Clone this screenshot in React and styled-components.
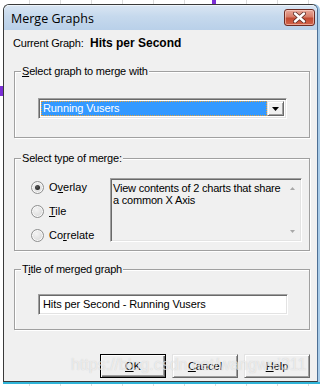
import React from 'react';
import styled, { createGlobalStyle, css } from 'styled-components';

const Global = createGlobalStyle`
  html, body { margin: 0; padding: 0; background: #fff; }
  #root { width: 321px; height: 386px; overflow: hidden; }
`;

const sunken = css`
  border: 1px solid;
  border-color: #a0a0a0 #fff #fff #a0a0a0;
  box-shadow: inset 1px 1px 0 #696969, inset -1px -1px 0 #e3e3e3;
`;

const raised = css`
  border: 1px solid;
  border-color: #e3e3e3 #696969 #696969 #e3e3e3;
  box-shadow: inset 1px 1px 0 #fff, inset -1px -1px 0 #a0a0a0;
`;

const Page = styled.div`
  position: relative;
  width: 321px;
  height: 386px;
  box-sizing: border-box;
  padding: 4px 0 0 3px;
  background:
    linear-gradient(#7b2fd6, #7b2fd6) 212px 0 / 4px 4px no-repeat,
    linear-gradient(#7b2fd6, #7b2fd6) 0 86px / 3px 10px no-repeat,
    linear-gradient(90deg, #dcdcdc 1px, transparent 1px) 29px 0 / 31px 100% repeat-x,
    #fff;
  font-family: "Liberation Sans", Arial, sans-serif;
  font-size: 11px;
  color: #000;
`;

const Window = styled.div`
  width: 315px;
  height: 378px;
  box-sizing: border-box;
  border: 1px solid #3a3a3a;
  border-right-color: #4d6f94;
  border-radius: 6px 6px 0 0;
  box-shadow: 1px 0 0 #a8cbe8, 2px 0 0 #a8cbe8, 0 1px 0 #2fb4d8, 1px 1px 0 #2fb4d8, 0 2px 0 #2fb4d8, 2px 2px 0 #2fb4d8;
  background: #f0f0f0;
  display: flex;
  flex-direction: column;
  overflow: hidden;
`;

const TitleBar = styled.div`
  height: 25px;
  flex: none;
  display: flex;
  align-items: center;
  justify-content: space-between;
  padding: 0 2px 0 7px;
  background: linear-gradient(#dae6f3, #c6d9ed 45%, #b9d0e9);
  border-radius: 5px 5px 0 0;
  box-shadow: inset 0 1px 0 #eef4fa;
`;

const TitleText = styled.span`
  font-family: "Open Sans", "Noto Sans", sans-serif;
  font-size: 12.5px;
  color: #000;
  padding-top: 1px;
`;

const CloseButton = styled.div`
  width: 29px;
  height: 15px;
  border: 1px solid #6e2b22;
  border-radius: 3px;
  background: linear-gradient(#e9a99b, #d77d69 45%, #c24a32 55%, #d2644a);
  box-shadow: inset 0 0 0 1px rgba(255, 220, 210, 0.55);
  display: flex;
  align-items: center;
  justify-content: center;
`;

const Body = styled.div`
  flex: 1;
  display: flex;
  flex-direction: column;
  padding: 0 0 0 10px;
`;

const CurrentRow = styled.div`
  display: flex;
  align-items: baseline;
  margin: 7px 0 0 -1px;
  line-height: 13px;
`;

const CurrentLabel = styled.span`
  width: 77px;
  letter-spacing: -0.2px;
`;

const CurrentValue = styled.span`
  font-weight: bold;
  font-size: 12px;
`;

const Group = styled.div`
  position: relative;
  box-sizing: border-box;
  width: 296px;
  height: ${p => p.$h}px;
  margin-top: ${p => p.$mt}px;
  border: 1px solid #a0a0a0;
  box-shadow: inset 1px 1px 0 #fff, 1px 1px 0 #fff;
`;

const Legend = styled.span`
  position: absolute;
  left: 6px;
  top: -8px;
  padding: 0 1px 0 1px;
  background: #f0f0f0;
  line-height: 14px;
  letter-spacing: -0.2px;
`;

const Combo = styled.div`
  ${sunken};
  box-sizing: border-box;
  margin: 26px 0 0 23px;
  width: 249px;
  height: 21px;
  padding: 2px;
  background: #fff;
  display: flex;
`;

const ComboValue = styled.div`
  flex: 1;
  background: #3399ff;
  color: #fff;
  line-height: 15px;
  padding-left: 2px;
  outline: 1px dotted #e8a33a;
  outline-offset: -1px;
  letter-spacing: -0.1px;
`;

const ComboButton = styled.div`
  ${raised};
  box-sizing: border-box;
  width: 17px;
  background: #f0f0f0;
  display: flex;
  align-items: center;
  justify-content: center;
`;

const MergeArea = styled.div`
  display: flex;
  padding: 19px 0 0 16px;
`;

const RadioList = styled.div`
  display: flex;
  flex-direction: column;
  gap: 10px;
  padding-top: 2px;
  width: 79px;
`;

const RadioRow = styled.div`
  display: flex;
  align-items: center;
  height: 14px;
  gap: 5px;
`;

const RadioCircle = styled.span`
  position: relative;
  width: 11px;
  height: 11px;
  border-radius: 50%;
  border: 1px solid #8e8f8f;
  background: radial-gradient(circle at 40% 35%, #f4f4f4, #dcdcdc 70%, #d0d0d0);
  box-shadow: inset 0 0 0 1px #fafafa;
  display: flex;
  align-items: center;
  justify-content: center;

  &::after {
    content: "";
    display: ${p => (p.$checked ? 'block' : 'none')};
    width: 5px;
    height: 5px;
    border-radius: 50%;
    background: radial-gradient(circle at 40% 35%, #5a5a5a, #111);
  }
`;

const Description = styled.div`
  ${sunken};
  box-sizing: border-box;
  width: 192px;
  height: 64px;
  display: flex;
  background: #f0f0f0;
`;

const DescText = styled.div`
  flex: 1;
  padding: 3px 0 0 2px;
  line-height: 12px;
  letter-spacing: -0.2px;
`;

const ScrollBar = styled.div`
  width: 17px;
  display: flex;
  flex-direction: column;
  justify-content: space-between;
  align-items: center;
  padding: 8px 0 8px;
  box-sizing: border-box;
`;

const TextInput = styled.div`
  ${sunken};
  box-sizing: border-box;
  margin: 24px 0 0 23px;
  width: 250px;
  height: 21px;
  background: #fff;
  padding: 3px 0 0 4px;
  line-height: 13px;
  letter-spacing: -0.1px;
`;

const ButtonRow = styled.div`
  display: flex;
  gap: 6px;
  margin: 24px 0 0 86px;
`;

const Button = styled.div`
  ${raised};
  box-sizing: border-box;
  width: 66px;
  height: 24px;
  background: #f0f0f0;
  display: flex;
  align-items: center;
  justify-content: center;
  ${p => p.$default && css`
    border-color: #000;
    box-shadow: inset 1px 1px 0 #fff, inset -1px -1px 0 #696969, inset -2px -2px 0 #a0a0a0;
  `}
`;

const U = styled.span`
  text-decoration: underline;
  text-underline-offset: 1px;
`;

const Watermark = styled.div`
  position: absolute;
  left: 71px;
  top: 356px;
  font-family: "Liberation Sans", Arial, sans-serif;
  font-size: 16px;
  color: rgba(255, 255, 255, 0.6);
  text-shadow: 0 0 1px rgba(120, 120, 120, 0.35);
  pointer-events: none;
  white-space: nowrap;
`;

const Arrow = ({ up, color = '#000', w = 7, h = 4 }) => (
  <svg width={w} height={h} viewBox={`0 0 ${w} ${h}`}>
    <polygon
      points={up ? `0,${h} ${w},${h} ${w / 2},0` : `0,0 ${w},0 ${w / 2},${h}`}
      fill={color}
    />
  </svg>
);

export default function App() {
  return (
    <>
      <Global />
      <Page>
        <Window>
          <TitleBar>
            <TitleText>Merge Graphs</TitleText>
            <CloseButton>
              <svg width="13" height="11" viewBox="0 0 13 11">
                <path d="M2 1.5 L11 9.5 M11 1.5 L2 9.5" stroke="#5a2a24" strokeWidth="4" strokeLinecap="round" />
                <path d="M2 1.5 L11 9.5 M11 1.5 L2 9.5" stroke="#fff" strokeWidth="2.4" strokeLinecap="round" />
              </svg>
            </CloseButton>
          </TitleBar>
          <Body>
            <CurrentRow>
              <CurrentLabel>Current Graph:</CurrentLabel>
              <CurrentValue>Hits per Second</CurrentValue>
            </CurrentRow>

            <Group $h={67} $mt={21}>
              <Legend><U>S</U>elect graph to merge with</Legend>
              <Combo>
                <ComboValue>Running Vusers</ComboValue>
                <ComboButton>
                  <Arrow />
                </ComboButton>
              </Combo>
            </Group>

            <Group $h={93} $mt={20}>
              <Legend>Select type of merge:</Legend>
              <MergeArea>
                <RadioList>
                  <RadioRow><RadioCircle $checked /><span>O<U>v</U>erlay</span></RadioRow>
                  <RadioRow><RadioCircle /><span><U>T</U>ile</span></RadioRow>
                  <RadioRow><RadioCircle /><span>Co<U>r</U>relate</span></RadioRow>
                </RadioList>
                <Description>
                  <DescText>View contents of 2 charts that share a common X Axis</DescText>
                  <ScrollBar>
                    <Arrow up color="#a8a8a8" w={5} h={3} />
                    <Arrow color="#a8a8a8" w={5} h={3} />
                  </ScrollBar>
                </Description>
              </MergeArea>
            </Group>

            <Group $h={61} $mt={18}>
              <Legend>T<U>i</U>tle of merged graph</Legend>
              <TextInput>Hits per Second - Running Vusers</TextInput>
            </Group>

            <ButtonRow>
              <Button $default><span><U>O</U>K</span></Button>
              <Button><span><U>C</U>ancel</span></Button>
              <Button><span><U>H</U>elp</span></Button>
            </ButtonRow>
          </Body>
        </Window>
        <Watermark>https://blog.csdn.net/wangwei311</Watermark>
      </Page>
    </>
  );
}
